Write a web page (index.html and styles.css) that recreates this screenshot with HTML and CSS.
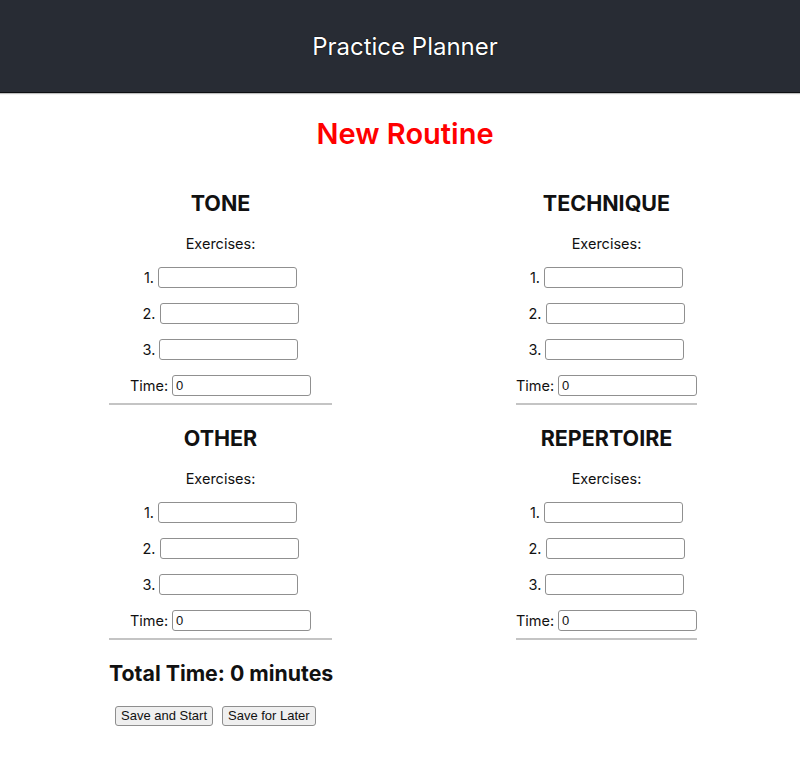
FILE: index.html
```html
<!DOCTYPE html>
<html lang="en">
<head>
<meta charset="utf-8">
<title>Practice Planner</title>
<link rel="stylesheet" href="styles.css">
</head>
<body>
<header class="app-header">
  <div class="app-title">Practice Planner</div>
</header>
<main class="page">
  <h1 class="page-title">New Routine</h1>
  <div class="columns">
    <div class="column column-left">
      <section class="category">
        <h2 class="category-title">TONE</h2>
        <p class="exercises-label">Exercises:</p>
        <div class="row"><label>1.</label> <input class="field" type="text"></div>
        <div class="row"><label>2.</label> <input class="field" type="text"></div>
        <div class="row"><label>3.</label> <input class="field" type="text"></div>
        <div class="row"><label>Time:</label> <input class="field" type="text" value="0"></div>
        <hr class="divider">
      </section>
      <section class="category">
        <h2 class="category-title">OTHER</h2>
        <p class="exercises-label">Exercises:</p>
        <div class="row"><label>1.</label> <input class="field" type="text"></div>
        <div class="row"><label>2.</label> <input class="field" type="text"></div>
        <div class="row"><label>3.</label> <input class="field" type="text"></div>
        <div class="row"><label>Time:</label> <input class="field" type="text" value="0"></div>
        <hr class="divider">
      </section>
      <h2 class="total">Total Time: 0 minutes</h2>
      <div class="actions">
        <button class="btn" type="button">Save and Start</button>
        <button class="btn" type="button">Save for Later</button>
      </div>
    </div>
    <div class="column column-right">
      <section class="category">
        <h2 class="category-title">TECHNIQUE</h2>
        <p class="exercises-label">Exercises:</p>
        <div class="row"><label>1.</label> <input class="field" type="text"></div>
        <div class="row"><label>2.</label> <input class="field" type="text"></div>
        <div class="row"><label>3.</label> <input class="field" type="text"></div>
        <div class="row"><label>Time:</label> <input class="field" type="text" value="0"></div>
        <hr class="divider">
      </section>
      <section class="category">
        <h2 class="category-title">REPERTOIRE</h2>
        <p class="exercises-label">Exercises:</p>
        <div class="row"><label>1.</label> <input class="field" type="text"></div>
        <div class="row"><label>2.</label> <input class="field" type="text"></div>
        <div class="row"><label>3.</label> <input class="field" type="text"></div>
        <div class="row"><label>Time:</label> <input class="field" type="text" value="0"></div>
        <hr class="divider">
      </section>
    </div>
  </div>
</main>
</body>
</html>
```
FILE: styles.css
```css
* { box-sizing: border-box; }

html, body {
  margin: 0;
  padding: 0;
  background: #ffffff;
}

body {
  font-family: Inter, "Noto Sans", "Liberation Sans", sans-serif;
  color: #111111;
}

.app-header {
  height: 93px;
  background: #282c34;
  border-bottom: 1px solid #0d0f12;
  box-shadow: 0 1px 1px rgba(0, 0, 0, 0.25);
  display: flex;
  align-items: center;
  justify-content: center;
  padding-left: 10px;
}

.app-title {
  color: #ffffff;
  font-size: 24px;
  line-height: 28px;
  text-shadow: 0 0 1px #000000, 0 0 1px #000000;
  padding-top: 1px;
}

.page {
  padding-left: 10px;
}

.page-title {
  margin: 24px 0 0;
  font-size: 29px;
  line-height: 34px;
  font-weight: 600;
  color: #ff0000;
  text-align: center;
}

.columns {
  display: flex;
  align-items: flex-start;
  margin-top: 39px;
  padding-left: 99px;
  gap: 184px;
}

.column-left { width: 223px; }
.column-right { width: 181px; }

.category {
  text-align: center;
}

.category-title {
  margin: 0;
  font-size: 21.5px;
  line-height: 26px;
  font-weight: 700;
}

.exercises-label {
  margin: 18px 0 0;
  font-size: 14.5px;
  line-height: 20px;
}

.row {
  margin-top: 15px;
  height: 21px;
  display: flex;
  align-items: center;
  justify-content: center;
  gap: 4px;
  font-size: 14.5px;
}

.exercises-label + .row { margin-top: 13px; }

.field {
  width: 139px;
  height: 21px;
  margin: 0;
  padding: 1px 3px;
  border: 1px solid #909090;
  border-radius: 3px;
  font-family: "Liberation Sans", Arial, sans-serif;
  font-size: 13px;
  color: #111111;
  background: #ffffff;
}

.divider {
  margin: 7px 0 0;
  border: none;
  border-top: 2px solid #c4c4c4;
  height: 0;
}

.category + .category { margin-top: 20px; }

.total {
  margin: 20px 0 0;
  font-size: 21.3px;
  line-height: 26px;
  font-weight: 700;
  white-space: nowrap;
}

.actions {
  margin-top: 20px;
  padding-left: 6px;
  display: flex;
  gap: 9px;
}

.btn {
  height: 20px;
  padding: 0 5px;
  border: 1px solid #8e8e8e;
  border-radius: 3px;
  background: #efefef;
  font-family: "Liberation Sans", Arial, sans-serif;
  font-size: 13px;
  color: #111111;
  line-height: 18px;
}
```
